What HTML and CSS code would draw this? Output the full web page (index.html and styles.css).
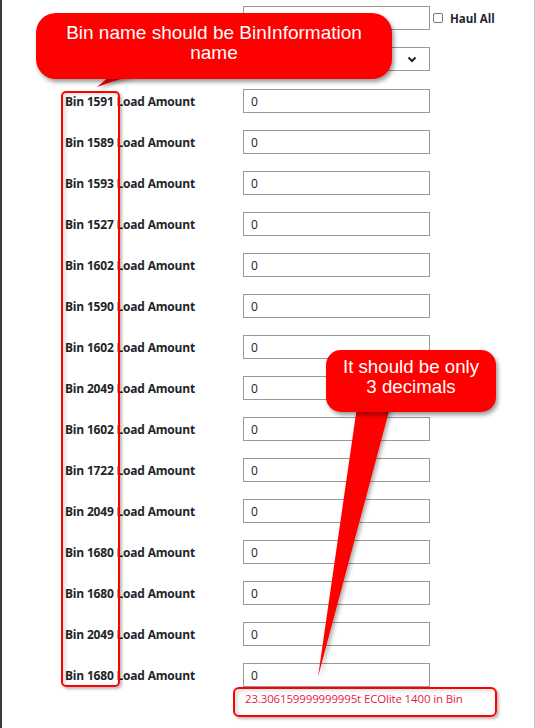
FILE: index.html
```html
<!DOCTYPE html>
<html>
<head>
<meta charset="utf-8">
<link rel="stylesheet" href="styles.css">
</head>
<body>
<div class="page">
  <form class="form">
    <div class="row">
      <span class="label"></span>
      <input class="field" type="text" value="">
      <label class="haul"><span class="check"></span>Haul All</label>
    </div>
    <div class="row row-select">
      <span class="label"></span>
      <div class="select"><svg class="chev" width="10" height="7" viewBox="0 0 10 7"><path d="M1.5 1.5 L5 5 L8.5 1.5" fill="none" stroke="#222" stroke-width="2"/></svg></div>
    </div>
    <div class="row"><span class="label">Bin 1591 Load Amount</span><input class="field" type="text" value="0"></div>
    <div class="row"><span class="label">Bin 1589 Load Amount</span><input class="field" type="text" value="0"></div>
    <div class="row"><span class="label">Bin 1593 Load Amount</span><input class="field" type="text" value="0"></div>
    <div class="row"><span class="label">Bin 1527 Load Amount</span><input class="field" type="text" value="0"></div>
    <div class="row"><span class="label">Bin 1602 Load Amount</span><input class="field" type="text" value="0"></div>
    <div class="row"><span class="label">Bin 1590 Load Amount</span><input class="field" type="text" value="0"></div>
    <div class="row"><span class="label">Bin 1602 Load Amount</span><input class="field" type="text" value="0"></div>
    <div class="row"><span class="label">Bin 2049 Load Amount</span><input class="field" type="text" value="0"></div>
    <div class="row"><span class="label">Bin 1602 Load Amount</span><input class="field" type="text" value="0"></div>
    <div class="row"><span class="label">Bin 1722 Load Amount</span><input class="field" type="text" value="0"></div>
    <div class="row"><span class="label">Bin 2049 Load Amount</span><input class="field" type="text" value="0"></div>
    <div class="row"><span class="label">Bin 1680 Load Amount</span><input class="field" type="text" value="0"></div>
    <div class="row"><span class="label">Bin 1680 Load Amount</span><input class="field" type="text" value="0"></div>
    <div class="row"><span class="label">Bin 2049 Load Amount</span><input class="field" type="text" value="0"></div>
    <div class="row last"><span class="label">Bin 1680 Load Amount</span><input class="field" type="text" value="0"></div>
    <div class="error">23.306159999999995t ECOlite 1400 in Bin</div>
  </form>

  <svg class="tails" width="535" height="728" viewBox="0 0 535 728">
    <defs>
      <filter id="sh" x="-20%" y="-20%" width="140%" height="140%">
        <feDropShadow dx="2" dy="2" stdDeviation="2" flood-color="#000" flood-opacity="0.35"/>
      </filter>
    </defs>
    <polygon points="117,70 147,70 97,87" fill="#ff0000" filter="url(#sh)"/>
    <polygon points="358,400 392,400 318,677" fill="#ff0000" filter="url(#sh)"/>
  </svg>

  <div class="mark mark-bins"></div>
  <div class="mark mark-error"></div>

  <div class="callout callout-bin">Bin name should be BinInformation<br>name</div>
  <div class="callout callout-dec">It should be only<br>3 decimals</div>
</div>
</body>
</html>
```

FILE: styles.css
```css
html, body {
  margin: 0;
  padding: 0;
  background: #ffffff;
}

.page {
  position: relative;
  width: 535px;
  height: 728px;
  box-sizing: border-box;
  border-left: 2px solid #3a3a3a;
  border-right: 1px solid #c8c8c8;
  overflow: hidden;
  font-family: "Open Sans", "Noto Sans", sans-serif;
}

.form {
  display: flex;
  flex-direction: column;
  gap: 17px;
  padding: 6px 0 0 63px;
  margin: 0;
}

.row {
  display: flex;
  align-items: center;
  height: 24px;
}

.row-select {
  margin-bottom: 1px;
}

.label {
  width: 178px;
  flex: none;
  font-size: 12px;
  font-weight: 700;
  color: #212529;
  white-space: nowrap;
  letter-spacing: -0.2px;
}

.field {
  box-sizing: border-box;
  width: 187px;
  height: 24px;
  margin: 0;
  border: 1px solid #999999;
  border-radius: 0;
  padding: 0 7px;
  font-family: "Open Sans", "Noto Sans", sans-serif;
  font-size: 12px;
  color: #222;
  background: #fff;
  outline: none;
}

.select {
  box-sizing: border-box;
  width: 187px;
  height: 24px;
  border: 1px solid #999999;
  display: flex;
  align-items: center;
  justify-content: flex-end;
  padding-right: 12px;
}

.chev {
  display: block;
}

.haul {
  display: flex;
  align-items: center;
  margin-left: 3px;
  font-size: 11.5px;
  font-weight: 700;
  color: #1f2233;
}

.check {
  width: 8px;
  height: 8px;
  border: 1px solid #767676;
  border-radius: 2px;
  margin-right: 7px;
  background: #fff;
}

.error {
  margin: -13px 0 0 180px;
  font-size: 11.5px;
  color: #e8184d;
  white-space: nowrap;
  letter-spacing: -0.15px;
  padding-left: 0;
}

.tails {
  position: absolute;
  left: -2px;
  top: 0;
}

.mark {
  position: absolute;
  border: 2px solid #ff0000;
  box-sizing: border-box;
  box-shadow: 2px 2px 3px rgba(0, 0, 0, 0.28), inset 3px 2px 4px rgba(0, 0, 0, 0.12);
}

.mark-bins {
  left: 59px;
  top: 91px;
  width: 59px;
  height: 596px;
  border-radius: 5px;
}

.mark-error {
  left: 231px;
  top: 687px;
  width: 264px;
  height: 30px;
  border-radius: 6px;
}

.callout {
  position: absolute;
  box-sizing: border-box;
  background: #ff0000;
  color: #ffffff;
  font-family: "Liberation Sans", Arial, sans-serif;
  font-size: 19px;
  line-height: 20px;
  text-align: center;
  box-shadow: 2px 3px 4px rgba(0, 0, 0, 0.4);
}

.callout-bin {
  left: 34px;
  top: 13px;
  width: 356px;
  height: 66px;
  border-radius: 20px;
  padding-top: 10px;
}

.callout-dec {
  left: 324px;
  top: 350px;
  width: 170px;
  height: 62px;
  border-radius: 15px;
  padding-top: 7px;
  font-size: 18.7px;
}
```
